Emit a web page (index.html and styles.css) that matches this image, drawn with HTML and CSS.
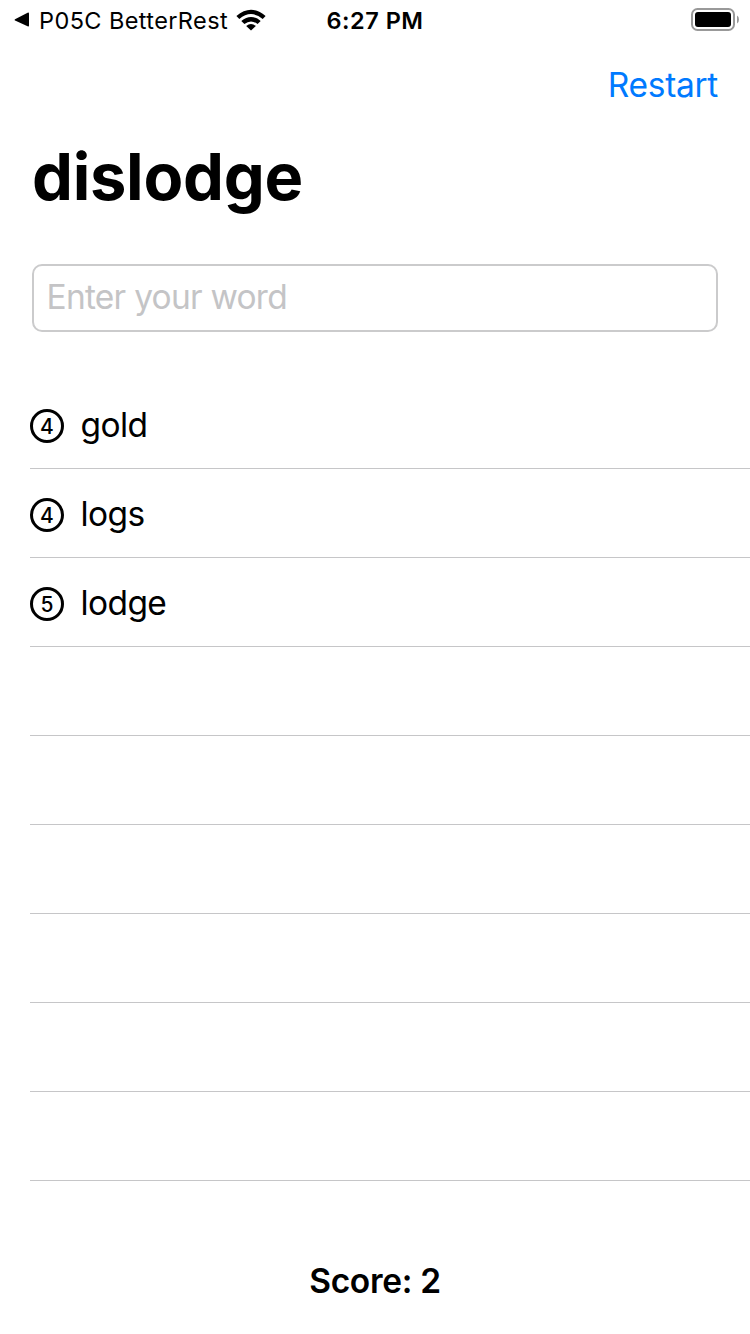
FILE: index.html
```html
<!DOCTYPE html>
<html lang="en">
<head>
<meta charset="utf-8">
<title>dislodge</title>
<link rel="stylesheet" href="styles.css">
</head>
<body>
<div class="screen">
  <header class="status">
    <div class="status-left">
      <svg class="back" viewBox="0 0 16 16"><path d="M1 7.2 L13.6 .8 Q15 .2 15 1.6 V13.4 Q15 14.8 13.6 14.2 L1 8.6 Q0 7.9 1 7.2Z"/></svg>
      <span class="app-name">P05C BetterRest</span>
      <svg class="wifi" viewBox="0 0 30 22"><path d="M.4 7.1 Q15-5.4 29.6 7.1 L26.7 10 Q15 .2 3.3 10Z"/><path d="M5.3 12 Q15 3.8 24.7 12 L21.6 15.1 Q15 9.7 8.4 15.1Z"/><path d="M10.2 16.9 Q15 13.1 19.8 16.9 L15 21.6Z"/></svg>
    </div>
    <div class="clock">6:27 PM</div>
    <div class="status-right">
      <svg class="battery" viewBox="0 0 48 24"><rect x="1" y="1" width="42" height="21" rx="5.5" fill="none" stroke="#999" stroke-width="2"/><rect x="4" y="4" width="36" height="15" rx="3"/><path d="M46 7.5 Q48 8.5 48 11.5 Q48 14.5 46 15.5Z" fill="#999"/></svg>
    </div>
  </header>
  <nav class="nav"><a class="restart">Restart</a></nav>
  <h1 class="title">dislodge</h1>
  <div class="field"><span class="placeholder">Enter your word</span></div>
  <ul class="list">
    <li class="row"><span class="count">4</span><span class="word">gold</span></li>
    <li class="row"><span class="count">4</span><span class="word">logs</span></li>
    <li class="row"><span class="count">5</span><span class="word">lodge</span></li>
    <li class="row"></li>
    <li class="row"></li>
    <li class="row"></li>
    <li class="row"></li>
    <li class="row"></li>
    <li class="row"></li>
  </ul>
  <footer class="score">Score: 2</footer>
</div>
</body>
</html>
```
FILE: styles.css
```css
* { box-sizing: border-box; }
body { margin: 0; background: #fff; color: #000; font-family: Inter, "Liberation Sans", sans-serif; }
.screen { width: 750px; height: 1334px; overflow: hidden; display: flex; flex-direction: column; }
.status { height: 40px; display: grid; grid-template-columns: 1fr auto 1fr; align-items: center; padding: 0 11px 0 14px; line-height: 38px; }
.status-left { display: flex; align-items: center; white-space: nowrap; }
.back { width: 16px; height: 16px; margin-right: 9px; }
.app-name { font-size: 23.5px; letter-spacing: .4px; padding-top: 2px; }
.wifi { width: 30px; height: 22px; margin-left: 8px; }
.clock { font-weight: 600; font-size: 23.5px; letter-spacing: .5px; padding: 2px 3px 0 0; }
.status-right { display: flex; justify-content: flex-end; }
.battery { width: 48px; height: 24px; }
.nav { height: 88px; display: flex; justify-content: flex-end; padding-right: 32px; }
.restart { color: #007aff; font-size: 33.5px; line-height: 90px; letter-spacing: -.3px; }
.title { margin: 0; height: 136px; padding-left: 32px; font-size: 65px; line-height: 98px; font-weight: 700; letter-spacing: -.3px; }
.field { height: 68px; margin: 0 32px; border: 2px solid #cbcbcc; border-radius: 10px; padding-left: 12.5px; flex: none; }
.placeholder { display: block; color: #c4c4c6; font-size: 33.5px; line-height: 62px; letter-spacing: -.75px; }
.list { list-style: none; margin: 48px 0 0; padding: 0 0 0 30px; }
.row { height: 89px; border-bottom: 1px solid #c6c6c8; display: flex; align-items: center; padding-top: 3px; }
.count { width: 34px; height: 34px; border: 3px solid #000; border-radius: 50%; font-size: 21px; font-weight: 500; line-height: 29px; text-align: center; margin-right: 16.5px; }
.word { font-size: 33.5px; line-height: 40px; letter-spacing: -.6px; padding-bottom: 1px; }
.score { margin-top: 56px; height: 88px; line-height: 88px; text-align: center; font-size: 33.5px; font-weight: 600; letter-spacing: -.3px; }
```
